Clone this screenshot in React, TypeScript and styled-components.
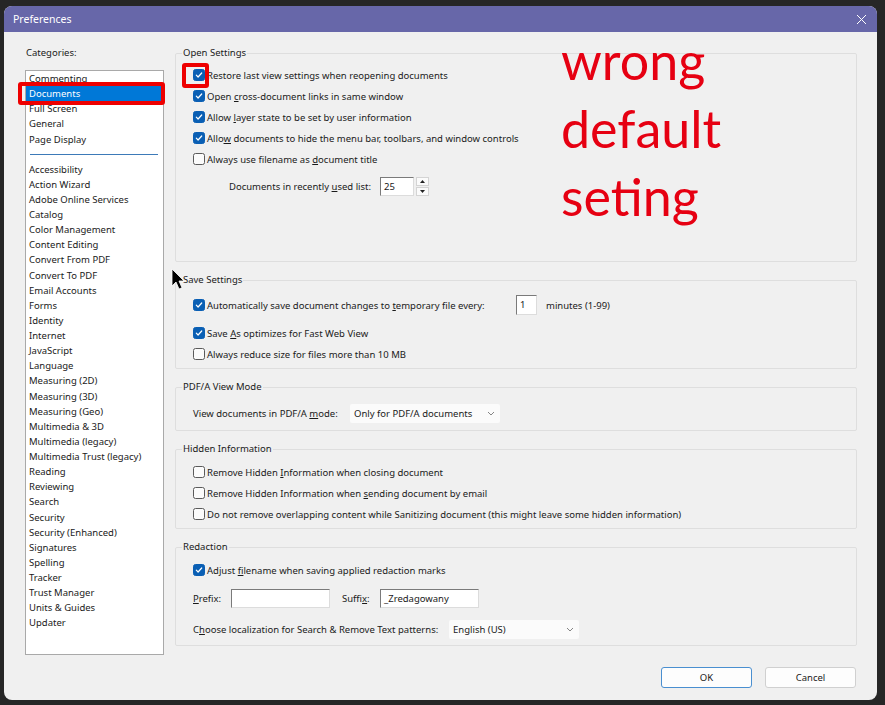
import React from "react";
import styled, { createGlobalStyle } from "styled-components";

const UI = `"Noto Sans", "Open Sans", sans-serif`;

const GlobalStyle = createGlobalStyle`
  html, body {
    margin: 0;
    padding: 0;
    background: #262626;
  }
  * {
    box-sizing: border-box;
  }
`;

const Screen = styled.div`
  width: 885px;
  height: 705px;
  padding: 6px 8px 5px 4px;
  background: #262626;
`;

const Dialog = styled.div`
  position: relative;
  display: flex;
  flex-direction: column;
  height: 694px;
  background: #f0f0f0;
  border-radius: 8px;
  overflow: hidden;
  font-family: ${UI};
  font-size: 9.5px;
  color: #1a1a1a;
`;

const TitleBar = styled.div`
  height: 26px;
  flex: none;
  display: flex;
  align-items: center;
  justify-content: space-between;
  padding: 0 10px 0 9px;
  background: #6767a9;
`;

const TitleText = styled.span`
  color: #fff;
  font-size: 10.5px;
`;

const Body = styled.div`
  flex: 1;
  display: flex;
  gap: 11px;
  padding: 14px 20px 0 21px;
`;

const Sidebar = styled.div`
  width: 139px;
  flex: none;
  display: flex;
  flex-direction: column;
`;

const SideLabel = styled.div`
  height: 14px;
  line-height: 14px;
  margin-bottom: 10px;
  padding-left: 1px;
`;

const CategoryList = styled.div`
  height: 585px;
  background: #fff;
  border: 1px solid #a9a9a9;
  padding: 0 2px 0 0;
`;

const CategoryItem = styled.div<{ $selected?: boolean }>`
  position: relative;
  height: 15.13px;
  line-height: 15px;
  padding-left: 3px;
  white-space: nowrap;
  background: ${(p) => (p.$selected ? "#0078d7" : "transparent")};
  color: ${(p) => (p.$selected ? "#fff" : "#1a1a1a")};
`;

const Separator = styled.div`
  height: 15px;
  display: flex;
  align-items: center;
  padding: 0 3px 0 4px;
  &::after {
    content: "";
    flex: 1;
    height: 1px;
    background: #3d7ab8;
  }
`;

const RedFrame = styled.span<{ $t: number; $l: number; $w: number; $h: number }>`
  position: absolute;
  top: ${(p) => p.$t}px;
  left: ${(p) => p.$l}px;
  width: ${(p) => p.$w}px;
  height: ${(p) => p.$h}px;
  border: 4px solid #ee0000;
  border-radius: 3px;
  pointer-events: none;
`;

const Main = styled.div`
  flex: 1;
  display: flex;
  flex-direction: column;
  gap: 11px;
`;

const Group = styled.fieldset<{ $h: number }>`
  height: ${(p) => p.$h}px;
  margin: 0;
  padding: 0 6px;
  border: 1px solid #dedede;
  border-radius: 2px;
  min-width: 0;
`;

const Legend = styled.legend`
  padding: 0 1px;
  line-height: 14px;
  font-size: 9.5px;
`;

const GroupBody = styled.div<{ $pt: number }>`
  padding: ${(p) => p.$pt}px 0 0 11px;
  display: flex;
  flex-direction: column;
`;

const Row = styled.div<{ $h?: number; $mt?: number; $indent?: number }>`
  display: flex;
  align-items: center;
  height: ${(p) => p.$h ?? 21}px;
  margin-top: ${(p) => p.$mt ?? 0}px;
  padding-left: ${(p) => p.$indent ?? 0}px;
  white-space: nowrap;
`;

const CheckBox = styled.span<{ $on?: boolean }>`
  position: relative;
  width: 12px;
  height: 12px;
  flex: none;
  margin-right: 2px;
  border-radius: 2.5px;
  display: flex;
  align-items: center;
  justify-content: center;
  background: ${(p) => (p.$on ? "#0a5fb4" : "#fbfbfb")};
  border: 1px solid ${(p) => (p.$on ? "#0a5fb4" : "#5a5a5a")};
`;

const Label = styled.span<{ $w?: number; $pl?: number }>`
  ${(p) => (p.$w ? `width: ${p.$w}px; flex: none;` : "")}
  padding-left: ${(p) => p.$pl ?? 0}px;
`;

const U = styled.span`
  text-decoration: underline;
  text-underline-offset: 1px;
`;

const TextInput = styled.div<{ $w: number; $h?: number }>`
  width: ${(p) => p.$w}px;
  height: ${(p) => p.$h ?? 19}px;
  flex: none;
  background: #fff;
  border-top: 1px solid #7a7a7a;
  border-left: 1px solid #7a7a7a;
  border-right: 1px solid #dcdcdc;
  border-bottom: 1px solid #dcdcdc;
  padding: 1px 0 0 3px;
  line-height: 15px;
  font-size: 9.5px;
`;

const Spin = styled.div`
  width: 13px;
  height: 19px;
  margin-left: 2px;
  flex: none;
  display: flex;
  flex-direction: column;
  gap: 1px;
`;

const SpinBtn = styled.div`
  flex: 1;
  background: #fbfbfb;
  border: 1px solid #d4d4d4;
  display: flex;
  align-items: center;
  justify-content: center;
`;

const Select = styled.div<{ $w: number }>`
  width: ${(p) => p.$w}px;
  height: 19px;
  flex: none;
  display: flex;
  align-items: center;
  justify-content: space-between;
  padding: 0 5px 0 4px;
  background: #fbfbfb;
  border-radius: 2px;
`;

const After = styled.span<{ $ml: number }>`
  margin-left: ${(p) => p.$ml}px;
`;

const Footer = styled.div`
  display: flex;
  justify-content: flex-end;
  gap: 13px;
  margin-top: 10px;
  padding-right: 1px;
`;

const Button = styled.div<{ $primary?: boolean }>`
  width: 91px;
  height: 21px;
  display: flex;
  align-items: center;
  justify-content: center;
  background: #fdfdfd;
  border: 1px solid ${(p) => (p.$primary ? "#4a8fd0" : "#d0d0d0")};
  border-radius: 3px;
  font-size: 9.5px;
`;

const Note = styled.div`
  position: absolute;
  left: 557px;
  top: 20px;
  font-family: Lato, "Open Sans", sans-serif;
  font-size: 52px;
  line-height: 68px;
  color: #e60012;
  pointer-events: none;
`;

const Cursor = styled.svg`
  position: absolute;
  left: 167px;
  top: 262px;
`;

const categoriesTop = ["Commenting", "Documents", "Full Screen", "General", "Page Display"];
const categoriesRest = [
  "Accessibility",
  "Action Wizard",
  "Adobe Online Services",
  "Catalog",
  "Color Management",
  "Content Editing",
  "Convert From PDF",
  "Convert To PDF",
  "Email Accounts",
  "Forms",
  "Identity",
  "Internet",
  "JavaScript",
  "Language",
  "Measuring (2D)",
  "Measuring (3D)",
  "Measuring (Geo)",
  "Multimedia & 3D",
  "Multimedia (legacy)",
  "Multimedia Trust (legacy)",
  "Reading",
  "Reviewing",
  "Search",
  "Security",
  "Security (Enhanced)",
  "Signatures",
  "Spelling",
  "Tracker",
  "Trust Manager",
  "Units & Guides",
  "Updater",
];

const Tick = () => (
  <svg width="8" height="8" viewBox="0 0 8 8">
    <polyline points="1.3,4.2 3.1,6 6.7,2" fill="none" stroke="#fff" strokeWidth="1.2" strokeLinecap="round" strokeLinejoin="round" />
  </svg>
);

const Check = ({ on, children }: { on?: boolean; children?: React.ReactNode }) => (
  <CheckBox $on={on}>
    {on && <Tick />}
    {children}
  </CheckBox>
);

const Chevron = () => (
  <svg width="8" height="5" viewBox="0 0 8 5">
    <polyline points="1,1 4,4 7,1" fill="none" stroke="#777" strokeWidth="0.9" />
  </svg>
);

const Arrow = ({ up }: { up?: boolean }) => (
  <svg width="5" height="3" viewBox="0 0 5 3">
    <polygon points={up ? "0,3 2.5,0 5,3" : "0,0 2.5,3 5,0"} fill="#222" />
  </svg>
);

export default function App() {
  return (
    <Screen>
      <GlobalStyle />
      <Dialog>
        <TitleBar>
          <TitleText>Preferences</TitleText>
          <svg width="11" height="11" viewBox="0 0 11 11">
            <path d="M1 1 L10 10 M10 1 L1 10" stroke="#fff" strokeWidth="1" />
          </svg>
        </TitleBar>
        <Body>
          <Sidebar>
            <SideLabel>Categories:</SideLabel>
            <CategoryList>
              {categoriesTop.map((c) => (
                <CategoryItem key={c} $selected={c === "Documents"}>
                  {c}
                  {c === "Documents" && <RedFrame $t={-4} $l={-8} $w={147} $h={23} />}
                </CategoryItem>
              ))}
              <Separator />
              {categoriesRest.map((c) => (
                <CategoryItem key={c}>{c}</CategoryItem>
              ))}
            </CategoryList>
          </Sidebar>

          <Main>
            <Group $h={216}>
              <Legend>Open Settings</Legend>
              <GroupBody $pt={4.5}>
                <Row>
                  <Check on>
                    <RedFrame $t={-7} $l={-12} $w={27} $h={25} />
                  </Check>
                  <Label>Restore last view settings when reopening documents</Label>
                </Row>
                <Row>
                  <Check on />
                  <Label>
                    Open <U>c</U>ross-document links in same window
                  </Label>
                </Row>
                <Row>
                  <Check on />
                  <Label>
                    Allow <U>l</U>ayer state to be set by user information
                  </Label>
                </Row>
                <Row>
                  <Check on />
                  <Label>
                    Allo<U>w</U> documents to hide the menu bar, toolbars, and window controls
                  </Label>
                </Row>
                <Row>
                  <Check />
                  <Label>
                    Always use filename as <U>d</U>ocument title
                  </Label>
                </Row>
                <Row $h={26} $mt={3.5} $indent={36}>
                  <Label $w={151}>
                    Documents in recently <U>u</U>sed list:
                  </Label>
                  <TextInput $w={34}>25</TextInput>
                  <Spin>
                    <SpinBtn>
                      <Arrow up />
                    </SpinBtn>
                    <SpinBtn>
                      <Arrow />
                    </SpinBtn>
                  </Spin>
                </Row>
              </GroupBody>
            </Group>

            <Group $h={96}>
              <Legend>Save Settings</Legend>
              <GroupBody $pt={5}>
                <Row $h={26}>
                  <Check on />
                  <Label $w={309}>
                    Automatically save document changes to <U>t</U>emporary file every:
                  </Label>
                  <TextInput $w={21} $h={20}>1</TextInput>
                  <After $ml={9}>minutes (1-99)</After>
                </Row>
                <Row $mt={4.5}>
                  <Check on />
                  <Label>
                    Save <U>A</U>s optimizes for Fast Web View
                  </Label>
                </Row>
                <Row>
                  <Check />
                  <Label>Always reduce size for files more than 10 MB</Label>
                </Row>
              </GroupBody>
            </Group>

            <Group $h={51}>
              <Legend>PDF/A View Mode</Legend>
              <GroupBody $pt={7}>
                <Row $h={24}>
                  <Label $w={157}>
                    View documents in PDF/A <U>m</U>ode:
                  </Label>
                  <Select $w={150}>
                    <span>Only for PDF/A documents</span>
                    <Chevron />
                  </Select>
                </Row>
              </GroupBody>
            </Group>

            <Group $h={87}>
              <Legend>Hidden Information</Legend>
              <GroupBody $pt={5.5}>
                <Row>
                  <Check />
                  <Label>
                    Remove Hidden <U>I</U>nformation when closing document
                  </Label>
                </Row>
                <Row>
                  <Check />
                  <Label>
                    Remove Hidden Information when <U>s</U>ending document by email
                  </Label>
                </Row>
                <Row>
                  <Check />
                  <Label>
                    Do not remove overlapping content while Sanitizing document (this might leave some hidden information)
                  </Label>
                </Row>
              </GroupBody>
            </Group>

            <Group $h={106}>
              <Legend>Redaction</Legend>
              <GroupBody $pt={5.5}>
                <Row>
                  <Check on />
                  <Label>
                    Adjust <U>f</U>ilename when saving applied redaction marks
                  </Label>
                </Row>
                <Row $h={26} $mt={4.5}>
                  <Label $w={38}>
                    <U>P</U>refix:
                  </Label>
                  <TextInput $w={99} />
                  <Label $w={50} $pl={12}>
                    Suffi<U>x</U>:
                  </Label>
                  <TextInput $w={99}>_Zredagowany</TextInput>
                </Row>
                <Row $h={26} $mt={5}>
                  <Label $w={256}>
                    C<U>h</U>oose localization for Search &amp; Remove Text patterns:
                  </Label>
                  <Select $w={130}>
                    <span>English (US)</span>
                    <Chevron />
                  </Select>
                </Row>
              </GroupBody>
            </Group>

            <Footer>
              <Button $primary>OK</Button>
              <Button>Cancel</Button>
            </Footer>
          </Main>
        </Body>

        <Note>
          wrong
          <br />
          default
          <br />
          seting
        </Note>

        <Cursor width="14" height="22" viewBox="0 0 14 22">
          <path d="M1 1 L1 18 L5 14 L8 21 L11 19.8 L8 13 L13 13 Z" fill="#000" stroke="#fff" strokeWidth="0.8" strokeLinejoin="round" />
        </Cursor>
      </Dialog>
    </Screen>
  );
}
